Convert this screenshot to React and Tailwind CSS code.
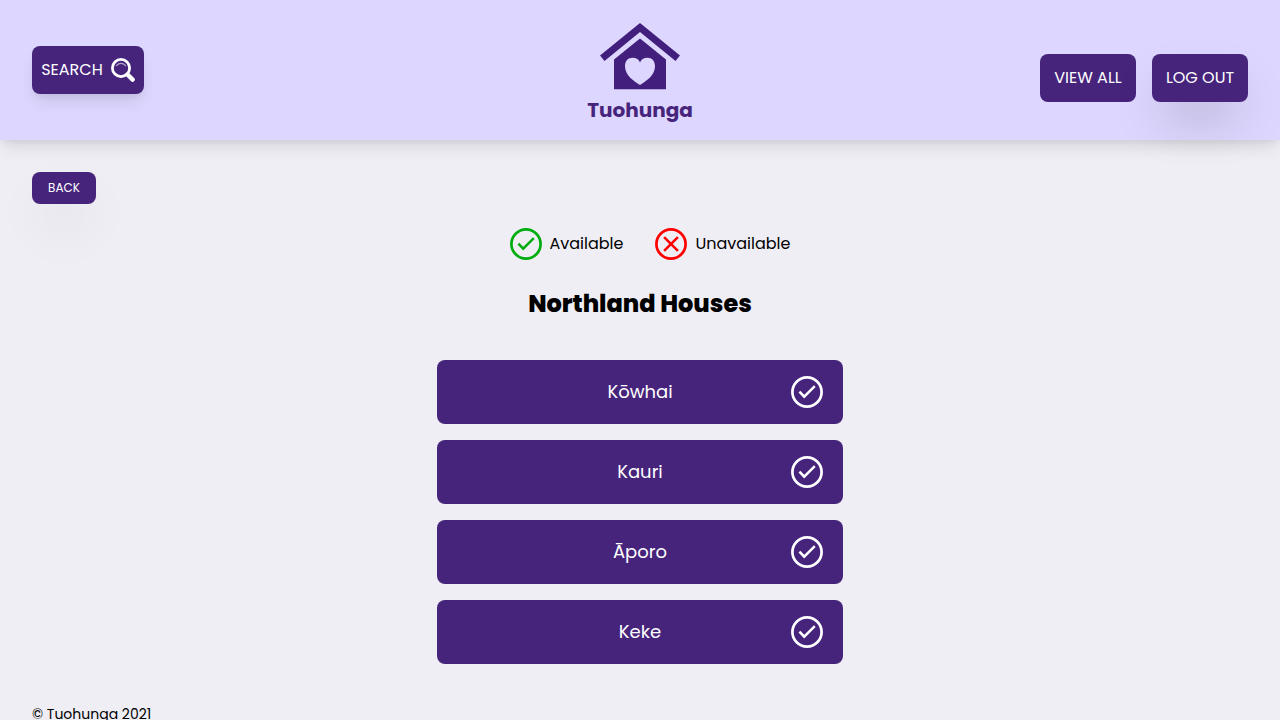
const font = 'font-["Poppins","Inter","Noto_Sans",sans-serif]';

function StatusIcon({ available = true, className = '' }) {
  return (
    <svg viewBox="0 0 32 32" className={`size-8 shrink-0 ${className}`} fill="none" stroke="currentColor" strokeWidth="2.5" aria-hidden="true">
      <circle cx="16" cy="16" r="14.6" strokeWidth="2.7" />
      {available ? (
        <path d="M8.4 15.6 L13.2 20.7 L23.8 10.1" />
      ) : (
        <path d="M9.1 9.1 L22.9 22.9 M22.9 9.1 L9.1 22.9" />
      )}
    </svg>
  );
}

function Logo() {
  return (
    <svg viewBox="0 0 80 80" className="size-20" fill="#421f7d" aria-hidden="true">
      <path d="M40 7 L80 39.5 L75.5 45 L40 16 L4.5 45 L0 39.5 Z" />
      <path
        fillRule="evenodd"
        d="M40 22.5 L66 43.5 V73.3 H14 V43.5 Z M40 69 C46 65.5 55 59 55 50.5 C55 45 52 41.8 47.5 41.8 C43.5 41.8 41 43.5 40 46.5 C39 43.5 36.5 41.8 32.5 41.8 C28 41.8 25 45 25 50.5 C25 59 34 65.5 40 69 Z"
      />
    </svg>
  );
}

function SearchIcon() {
  return (
    <svg viewBox="0 0 24 24" className="size-6" fill="none" stroke="#ffffff" aria-hidden="true">
      <circle cx="10" cy="10" r="8.6" strokeWidth="2.8" />
      <path d="M16.5 16.5 L21.6 21.6" strokeWidth="4.4" strokeLinecap="round" />
      <path d="M5.4 7.6 Q10 3.2 14.6 7.6" strokeWidth="1.2" strokeLinecap="round" opacity="0.6" />
    </svg>
  );
}

const houses = ['Kōwhai', 'Kauri', 'Āporo', 'Keke'];

export default function App() {
  return (
    <div className={`min-h-screen bg-[#efeef5] text-base text-black ${font}`}>
      <header className="relative grid grid-cols-3 items-center bg-[#ddd6fe] px-8 py-4 shadow-[0_10px_15px_-3px_rgba(0,0,0,0.1),0_4px_6px_-2px_rgba(0,0,0,0.05)]">
        <button className="flex h-12 w-28 items-center justify-center gap-2 rounded-lg bg-[#46247c] text-white shadow-[0_10px_15px_-3px_rgba(0,0,0,0.1),0_4px_6px_-2px_rgba(0,0,0,0.05)]">
          SEARCH
          <SearchIcon />
        </button>
        <a href="#home" className="flex flex-col items-center justify-self-center text-xl font-bold text-[#46247c]">
          <Logo />
          Tuohunga
        </a>
        <nav className="flex justify-end gap-4 pt-4">
          <button className="h-12 w-24 whitespace-nowrap rounded-lg bg-[#46247c] text-white">VIEW ALL</button>
          <button className="h-12 w-24 whitespace-nowrap rounded-lg bg-[#46247c] text-white shadow-[0_25px_50px_-12px_rgba(0,0,0,0.25)]">LOG OUT</button>
        </nav>
      </header>
      <main className="flex flex-col items-center px-8 pt-8">
        <button className="h-8 w-16 self-start rounded-lg bg-[#46247c] text-xs text-white shadow-[0_25px_50px_-12px_rgba(0,0,0,0.25)]">BACK</button>
        <div className="mt-6 flex gap-8 pl-5">
          <div className="flex items-center gap-2">
            <StatusIcon className="text-[#00ad0e]" />
            Available
          </div>
          <div className="flex items-center gap-2">
            <StatusIcon available={false} className="text-[#ff0000]" />
            Unavailable
          </div>
        </div>
        <h1 className="mt-7 text-2xl font-extrabold">Northland Houses</h1>
        <ul className="mt-10 flex w-1/3 flex-col gap-4">
          {houses.map((name) => (
            <li key={name}>
              <button className="grid h-16 w-full grid-cols-[32px_1fr_32px] items-center rounded-lg bg-[#46247c] px-5 text-lg text-white">
                <span className="col-start-2">{name}</span>
                <StatusIcon />
              </button>
            </li>
          ))}
        </ul>
      </main>
      <footer className="px-8 pt-10 pb-8 text-sm">© Tuohunga 2021</footer>
    </div>
  );
}
